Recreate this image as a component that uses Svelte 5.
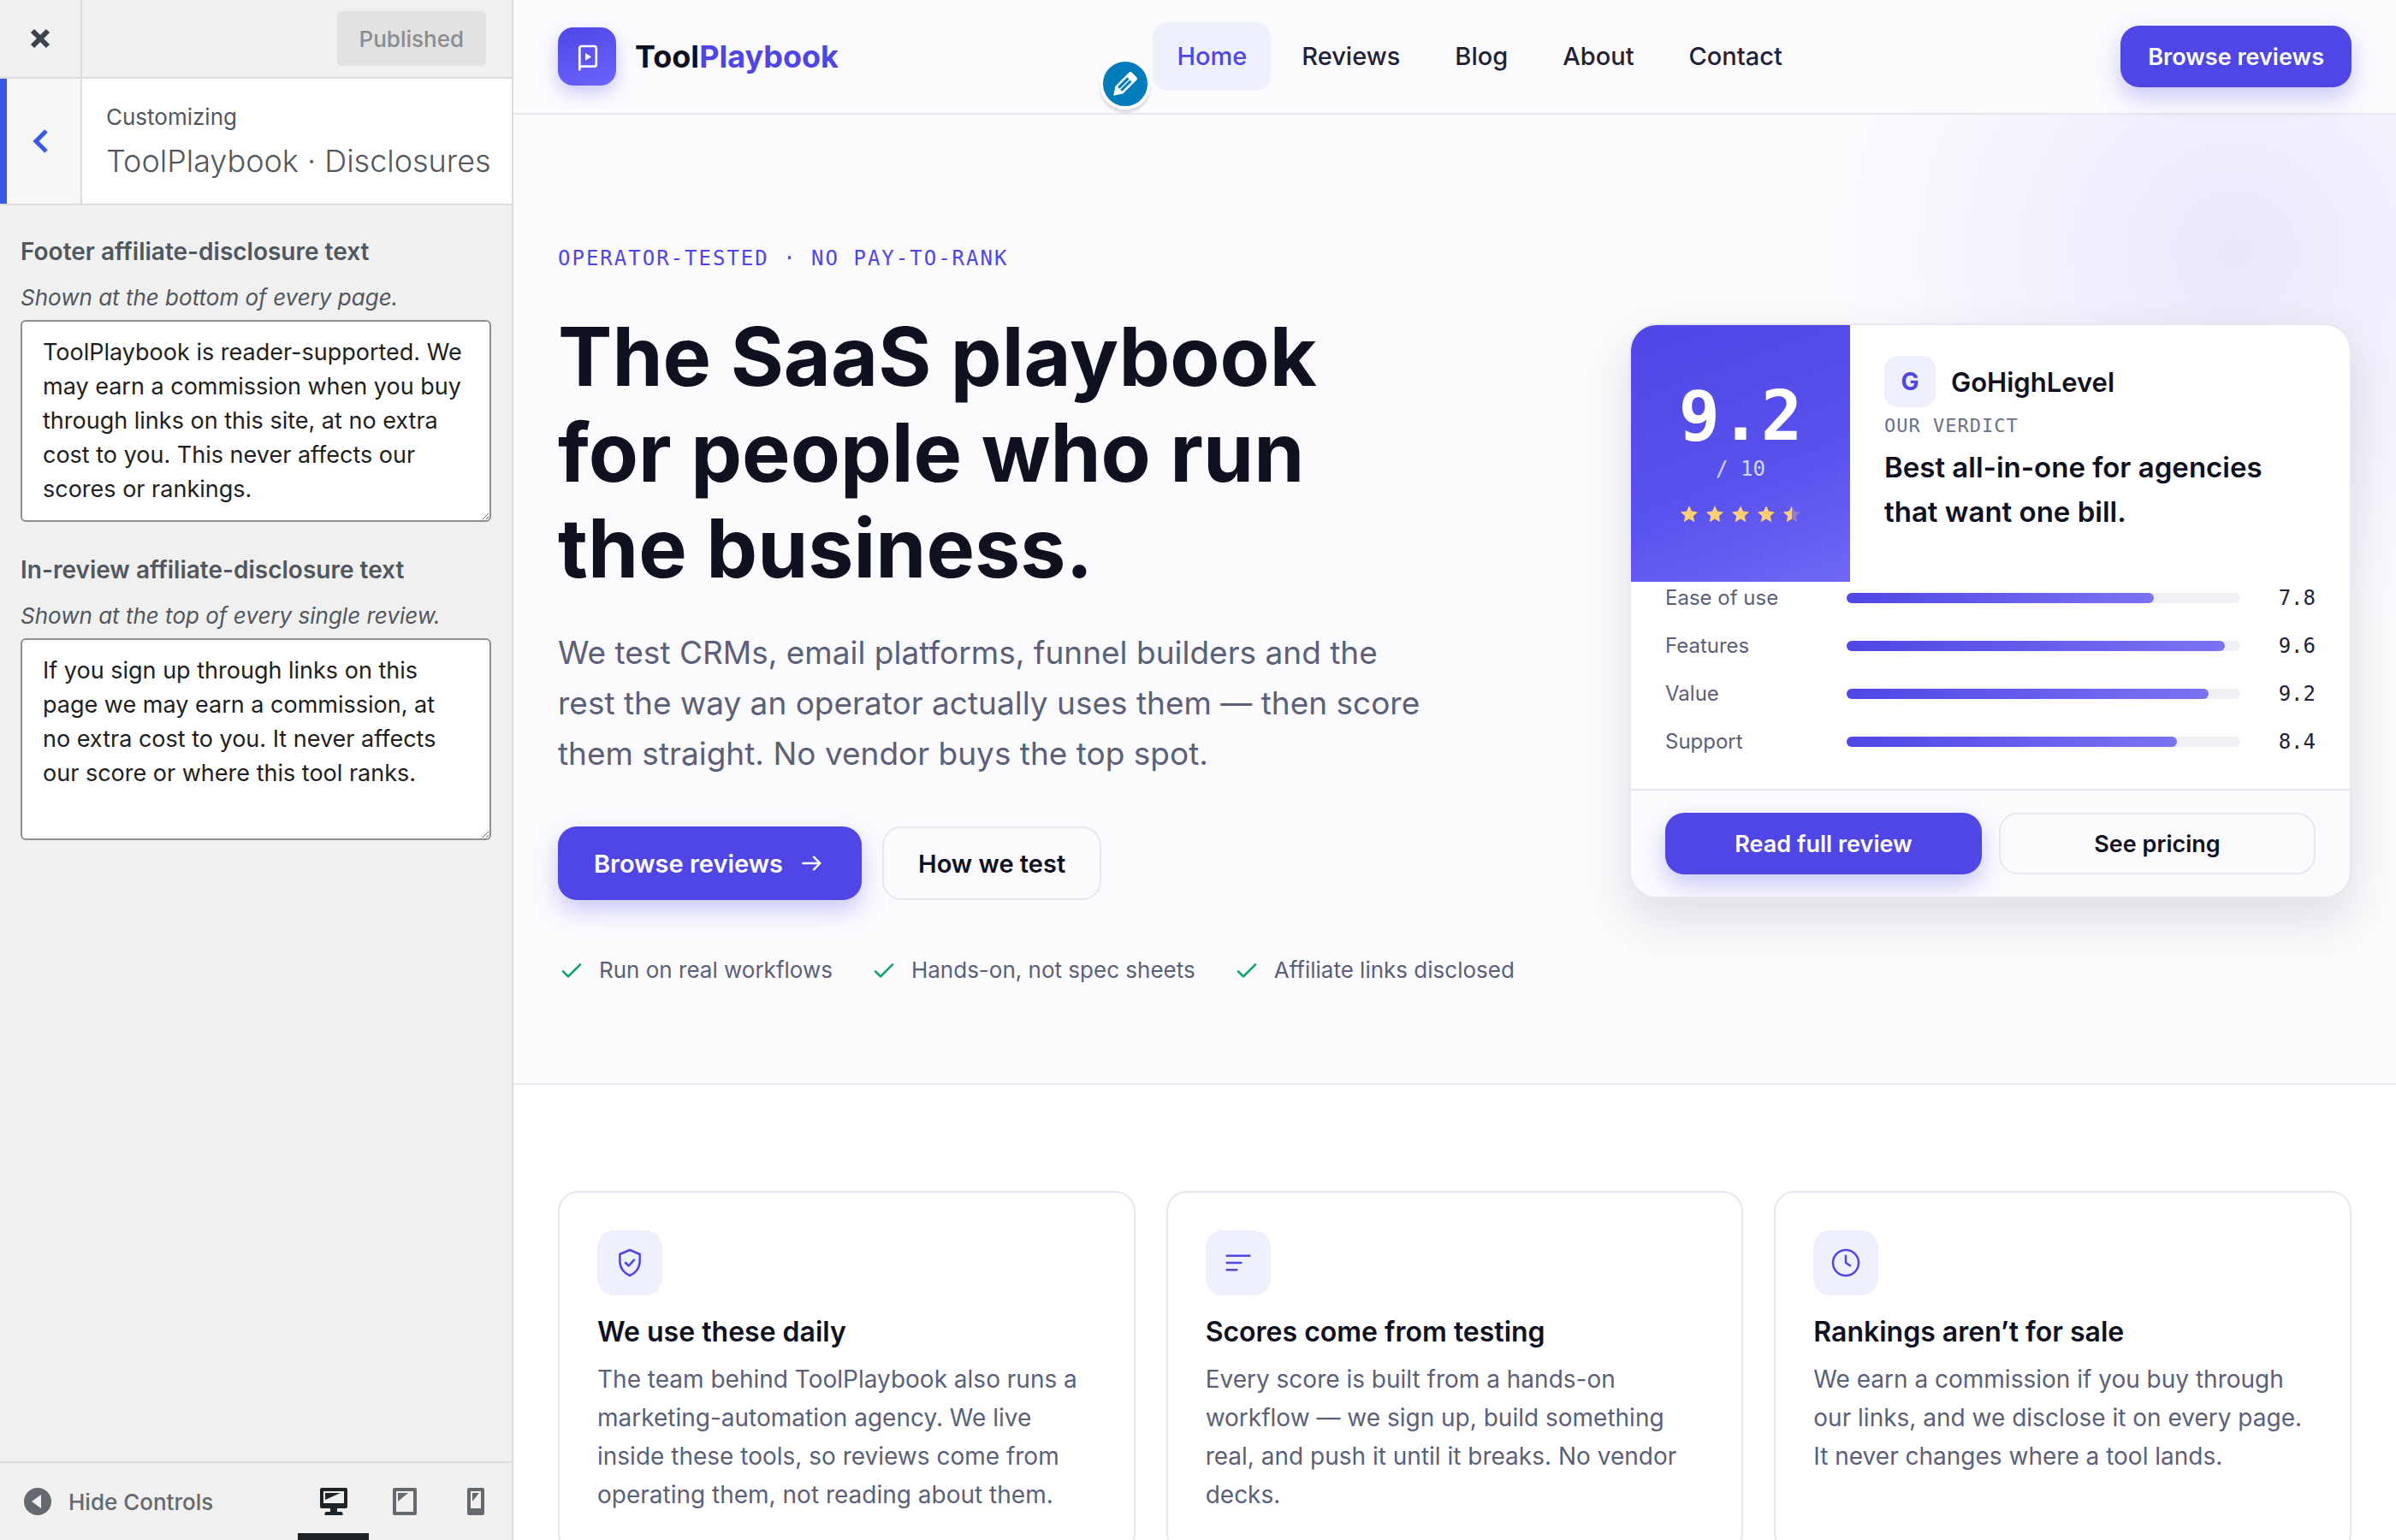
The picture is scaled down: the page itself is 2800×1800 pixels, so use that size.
<script lang="ts">
	const nav = ['Home', 'Reviews', 'Blog', 'About', 'Contact'];

	const proof = ['Run on real workflows', 'Hands-on, not spec sheets', 'Affiliate links disclosed'];

	const scores = [
		{ label: 'Ease of use', value: 7.8 },
		{ label: 'Features', value: 9.6 },
		{ label: 'Value', value: 9.2 },
		{ label: 'Support', value: 8.4 }
	];

	const features = [
		{
			icon: 'shield',
			title: 'We use these daily',
			text: 'The team behind ToolPlaybook also runs a marketing-automation agency. We live inside these tools, so reviews come from operating them, not reading about them.'
		},
		{
			icon: 'lines',
			title: 'Scores come from testing',
			text: 'Every score is built from a hands-on workflow — we sign up, build something real, and push it until it breaks. No vendor decks.'
		},
		{
			icon: 'clock',
			title: 'Rankings aren’t for sale',
			text: 'We earn a commission if you buy through our links, and we disclose it on every page. It never changes where a tool lands.'
		}
	];

	const starPath = 'M12 2l3 6.6 7 .8-5.2 4.8 1.5 7L12 17.6l-6.3 3.6 1.5-7L2 9.4l7-.8z';

	let footerText = $state(
		'ToolPlaybook is reader-supported. We may earn a commission when you buy through links on this site, at no extra cost to you. This never affects our scores or rankings.'
	);
	let reviewText = $state(
		'If you sign up through links on this page we may earn a commission, at no extra cost to you. It never affects our score or where this tool ranks.'
	);
</script>

<div class="customizer">
	<aside class="panel">
		<div class="panel-top">
			<button class="close" aria-label="Close the Customizer">
				<svg viewBox="0 0 24 24" width="24" height="24">
					<path d="M3 3l18 18M21 3L3 21" stroke="currentColor" stroke-width="6" />
				</svg>
			</button>
			<button class="publish" disabled>Published</button>
		</div>

		<div class="panel-title">
			<button class="back" aria-label="Back">
				<svg viewBox="0 0 18 28" width="18" height="28">
					<path d="M16 2L4 14l12 12" fill="none" stroke="currentColor" stroke-width="5" />
				</svg>
			</button>
			<div class="panel-heading">
				<span>Customizing</span>
				<h3>ToolPlaybook · Disclosures</h3>
			</div>
		</div>

		<div class="controls">
			<div class="control">
				<label for="footer-disclosure">Footer affiliate-disclosure text</label>
				<p id="footer-help">Shown at the bottom of every page.</p>
				<textarea id="footer-disclosure" aria-describedby="footer-help" rows="5" bind:value={footerText}></textarea>
			</div>
			<div class="control">
				<label for="review-disclosure">In-review affiliate-disclosure text</label>
				<p id="review-help">Shown at the top of every single review.</p>
				<textarea id="review-disclosure" aria-describedby="review-help" rows="5" bind:value={reviewText}></textarea>
			</div>
		</div>

		<div class="panel-footer">
			<button class="collapse">
				<svg viewBox="0 0 32 32" width="32" height="32">
					<circle cx="16" cy="16" r="16" fill="currentColor" />
					<path d="M9 16l11-8v16z" fill="#f0f0f0" />
				</svg>
				Hide Controls
			</button>
			<div class="devices">
				<button class="active" aria-label="Desktop preview">
					<svg viewBox="0 0 32 32" width="32" height="32" fill="currentColor">
						<path
							fill-rule="evenodd"
							d="M2 0h28a2 2 0 0 1 2 2v20a2 2 0 0 1-2 2H20v4h4.5a2 2 0 0 1 2 2v2h-21v-2a2 2 0 0 1 2-2H12v-4H2a2 2 0 0 1-2-2V2a2 2 0 0 1 2-2zM4 4v14h24V4z"
						/>
						<path d="M6 6h18L6 14z" />
					</svg>
				</button>
				<button aria-label="Tablet preview">
					<svg viewBox="0 0 28 32" width="28" height="32" fill="currentColor">
						<path
							fill-rule="evenodd"
							d="M2 0h24a2 2 0 0 1 2 2v28a2 2 0 0 1-2 2H2a2 2 0 0 1-2-2V2a2 2 0 0 1 2-2zM4 4v24h20V4z"
						/>
						<path d="M6 6h12L6 16z" />
					</svg>
				</button>
				<button aria-label="Mobile preview">
					<svg viewBox="0 0 20 32" width="20" height="32" fill="currentColor">
						<path
							fill-rule="evenodd"
							d="M2 0h16a2 2 0 0 1 2 2v28a2 2 0 0 1-2 2H2a2 2 0 0 1-2-2V2a2 2 0 0 1 2-2zM4 4v20h12V4z"
						/>
						<path d="M6 6h8L6 16z" />
					</svg>
				</button>
			</div>
		</div>
	</aside>

	<main class="preview">
		<header class="site-header">
			<a class="brand" href="#home">
				<span class="brand-mark">
					<svg viewBox="0 0 24 24" width="36" height="36" fill="none" stroke="#fff" stroke-width="1.8">
						<path
							d="M6.2 22.2V5.6A1.6 1.6 0 0 1 7.8 4h9.8a1.6 1.6 0 0 1 1.6 1.6v12.600a1.6 1.6 0 0 1-1.6 1.6H8a1.8 1.8 0 0 0-1.8 1.2"
							stroke-linecap="round"
							stroke-linejoin="round"
						/>
						<path d="M10.7 9.4l4.7 2.9-4.7 2.9z" fill="#fff" stroke="none" />
					</svg>
				</span>
				<span class="brand-name">Tool<em>Playbook</em></span>
			</a>
			<nav>
				<button class="edit-shortcut" aria-label="Edit this menu">
					<svg viewBox="0 0 20 20" width="40" height="40">
						<path
							fill="#fff"
							d="M13.890 3.390l2.710 2.720c.46.46.42 1.240.030 1.640l-8.010 8.020-5.560 1.160 1.160-5.580s7.600-7.630 7.990-8.030c.39-.39 1.220-.39 1.680.07zm-2.730 2.790l-5.590 5.610 1.110 1.110 5.540-5.650zm-2.970 8.230l5.580-5.600-1.070-1.080-5.590 5.600z"
						/>
					</svg>
				</button>
				{#each nav as item, i}
					<a href="#{item.toLowerCase()}" class:current={i === 0}>{item}</a>
				{/each}
			</nav>
			<a class="btn primary small" href="#reviews">Browse reviews</a>
		</header>

		<section class="hero">
			<div class="hero-copy">
				<p class="eyebrow">Operator-tested · No pay-to-rank</p>
				<h1>The SaaS playbook<br />for people who run<br />the business.</h1>
				<p class="lead">
					We test CRMs, email platforms, funnel builders and the rest the way an operator actually uses them —
					then score them straight. No vendor buys the top spot.
				</p>
				<div class="actions">
					<a class="btn primary" href="#reviews">
						Browse reviews
						<svg viewBox="0 0 24 24" width="32" height="32" fill="none" stroke="currentColor" stroke-width="1.8" stroke-linecap="round" stroke-linejoin="round">
							<path d="M4 12h15M13.5 6.5L19 12l-5.5 5.5" />
						</svg>
					</a>
					<a class="btn outline" href="#method">How we test</a>
				</div>
				<ul class="proof">
					{#each proof as item}
						<li>
							<svg viewBox="0 0 24 24" width="32" height="32" fill="none" stroke="currentColor" stroke-width="2" stroke-linecap="round" stroke-linejoin="round">
								<path d="M4.5 13L9 17.5 19.5 7" />
							</svg>
							{item}
						</li>
					{/each}
				</ul>
			</div>

			<article class="verdict">
				<div class="verdict-top">
					<div class="score">
						<strong>9.2</strong>
						<span>/ 10</span>
						<div class="stars" role="img" aria-label="4.5 out of 5 stars">
							{#each Array(5) as _, i}
								<svg viewBox="0 0 24 24" width="24" height="24">
									{#if i < 4}
										<path d={starPath} fill="#ffd073" />
									{:else}
										<path d={starPath} fill="#ffd073" opacity="0.3" />
										<path d="M12 2v15.6l-6.3 3.6 1.5-7L2 9.4l7-.8z" fill="#ffd073" />
									{/if}
								</svg>
							{/each}
						</div>
					</div>
					<div class="summary">
						<div class="tool">
							<span class="tool-mark">G</span>
							<span class="tool-name">GoHighLevel</span>
						</div>
						<p class="kicker">Our verdict</p>
						<h2>Best all-in-one for agencies that want one bill.</h2>
					</div>
				</div>
				<dl class="scores">
					{#each scores as score}
						<div class="score-row">
							<dt>{score.label}</dt>
							<dd class="track"><div class="fill" style="width: {score.value * 10}%"></div></dd>
							<dd class="value">{score.value.toFixed(1)}</dd>
						</div>
					{/each}
				</dl>
				<div class="verdict-actions">
					<a class="btn primary small" href="#review">Read full review</a>
					<a class="btn outline small" href="#pricing">See pricing</a>
				</div>
			</article>
		</section>

		<section class="features">
			{#each features as feature}
				<article class="feature">
					<div class="feature-icon">
						<svg viewBox="0 0 24 24" width="40" height="40" fill="none" stroke="currentColor" stroke-width="1.5" stroke-linecap="round" stroke-linejoin="round">
							{#if feature.icon === 'shield'}
								<path d="M12 3l7 3v5c0 4.5-3 8.3-7 10-4-1.7-7-5.5-7-10V6z" />
								<path d="M9 12l2.2 2.2L15 10" />
							{:else if feature.icon === 'lines'}
								<path d="M4 7h16M4 12h10M4 17h7" />
							{:else}
								<circle cx="12" cy="12" r="9" />
								<path d="M12 7v5l3 2" />
							{/if}
						</svg>
					</div>
					<h3>{feature.title}</h3>
					<p>{feature.text}</p>
				</article>
			{/each}
		</section>
	</main>
</div>

<style>
	:global(body) {
		font-family: Inter, 'Liberation Sans', sans-serif;
		-webkit-font-smoothing: antialiased;
	}

	h1,
	h2,
	h3,
	p,
	ul,
	dl,
	dd {
		margin: 0;
		padding: 0;
	}

	button {
		font: inherit;
		border: 0;
		padding: 0;
		background: none;
		cursor: pointer;
	}

	a {
		color: inherit;
		text-decoration: none;
	}

	svg {
		display: block;
		flex: none;
	}

	.customizer {
		display: grid;
		grid-template-columns: 600px 1fr;
		height: 100vh;
		overflow: hidden;
	}

	/* Sidebar */
	.panel {
		display: flex;
		flex-direction: column;
		background: #f0f0f0;
		border-right: 2px solid #dcdcde;
		color: #50575e;
	}

	.panel-top {
		display: flex;
		align-items: center;
		justify-content: space-between;
		height: 90px;
		padding-right: 30px;
		border-bottom: 2px solid #dcdcde;
	}

	.close {
		display: grid;
		place-items: center;
		width: 96px;
		height: 100%;
		box-sizing: border-box;
		border-right: 2px solid #dcdcde;
		color: #3c434a;
	}

	.publish {
		height: 64px;
		padding: 0 26px;
		border-radius: 6px;
		background: #e2e2e2;
		color: #8c8c8c;
		font-size: 26px;
		font-weight: 500;
	}

	.panel-title {
		display: flex;
		height: 146px;
		background: #fff;
		border-bottom: 2px solid #dcdcde;
	}

	.back {
		display: grid;
		place-items: center;
		width: 96px;
		box-sizing: border-box;
		border-right: 2px solid #dcdcde;
		background: #f6f7f7;
		box-shadow: inset 8px 0 #3858e9;
		color: #3858e9;
	}

	.panel-heading {
		padding: 24px 0 0 28px;
		font-size: 26px;
		line-height: 42px;
		white-space: nowrap;
	}

	.panel-heading h3 {
		font-size: 36px;
		font-weight: 300;
		line-height: 60px;
	}

	.controls {
		display: flex;
		flex: 1;
		flex-direction: column;
		gap: 36px;
		padding: 34px 24px;
	}

	.control {
		display: flex;
		flex-direction: column;
	}

	.control label {
		font-size: 28px;
		font-weight: 600;
		line-height: 40px;
	}

	.control p {
		margin: 16px 0 8px;
		font-size: 26px;
		font-style: italic;
		line-height: 36px;
	}

	textarea {
		padding: 16px 28px 16px 24px;
		border: 2px solid #8c8f94;
		border-radius: 6px;
		background: #fff;
		color: #1e1e1e;
		font: 27px/40px Inter, 'Liberation Sans', sans-serif;
		resize: vertical;
	}

	.panel-footer {
		display: flex;
		justify-content: space-between;
		height: 90px;
		padding-left: 28px;
		border-top: 2px solid #dcdcde;
		color: #646970;
	}

	.collapse {
		display: flex;
		align-items: center;
		gap: 20px;
		color: inherit;
		font-size: 26px;
		font-weight: 500;
	}

	.devices {
		display: flex;
		width: 250px;
	}

	.devices button {
		display: grid;
		flex: 1;
		place-items: center;
		border-top: 8px solid transparent;
		border-bottom: 8px solid transparent;
		color: inherit;
	}

	.devices .active {
		border-bottom-color: #1d2327;
		color: #1d2327;
	}

	/* Site preview */
	.preview {
		overflow: hidden;
		background: #fff;
		color: #0f1020;
	}

	.site-header {
		display: flex;
		align-items: center;
		justify-content: space-between;
		height: 132px;
		padding: 0 52px;
		border-bottom: 2px solid #e7e7f0;
		background: #fbfbfe;
	}

	.brand {
		display: flex;
		align-items: center;
		gap: 22px;
	}

	.brand-mark {
		display: grid;
		place-items: center;
		width: 68px;
		height: 68px;
		border-radius: 18px;
		background: linear-gradient(160deg, #4f46e5, #6d63ff);
		box-shadow: 0 8px 20px rgba(79, 70, 229, 0.28);
	}

	.brand-name {
		font-size: 36px;
		font-weight: 700;
	}

	.brand-name em {
		color: #4f46e5;
		font-style: normal;
	}

	nav {
		position: relative;
		display: flex;
		gap: 8px;
	}

	nav a {
		padding: 0 28px;
		border-radius: 18px;
		color: #1f2136;
		font-size: 29px;
		font-weight: 500;
		line-height: 80px;
	}

	nav .current {
		background: #eef0fd;
		color: #4f46e5;
	}

	.edit-shortcut {
		position: absolute;
		top: 42px;
		left: -62px;
		display: grid;
		place-items: center;
		width: 60px;
		height: 60px;
		border: 4px solid #fff;
		border-radius: 50%;
		background: #007cba;
		box-shadow: 0 4px 2px rgba(46, 68, 83, 0.15);
	}

	.btn {
		display: flex;
		align-items: center;
		justify-content: center;
		gap: 18px;
		height: 86px;
		padding: 0 42px;
		box-sizing: border-box;
		border-radius: 22px;
		font-size: 29px;
		font-weight: 600;
		white-space: nowrap;
	}

	.btn.small {
		height: 72px;
		padding: 0 32px;
		font-size: 27px;
	}

	.btn.primary {
		background: #4f46e5;
		color: #fff;
		box-shadow: 0 12px 28px rgba(79, 70, 229, 0.28);
	}

	.btn.outline {
		padding: 0 40px;
		border: 2px solid #e7e7f0;
	}

	.hero {
		display: grid;
		grid-template-columns: 1fr 844px;
		align-items: center;
		gap: 100px;
		padding: 144px 52px 116px;
		border-bottom: 2px solid #e7e7f0;
		background:
			radial-gradient(circle 470px at calc(100% - 188px) 160px, rgba(79, 70, 229, 0.1), transparent) no-repeat,
			#fbfbfe;
	}

	.eyebrow,
	.kicker {
		font-family: 'DejaVu Sans Mono', monospace;
		text-transform: uppercase;
	}

	.eyebrow {
		color: #4f46e5;
		font-size: 24px;
		letter-spacing: 2px;
		line-height: 48px;
	}

	h1 {
		margin: 35px 0 36px;
		font-size: 95px;
		font-weight: 700;
		line-height: 112px;
	}

	.lead {
		max-width: 1020px;
		color: #5b5f78;
		font-size: 37px;
		line-height: 59px;
	}

	.actions {
		display: flex;
		gap: 24px;
		margin: 56px 0 66px;
	}

	.proof {
		display: flex;
		gap: 44px;
		color: #5b5f78;
		font-size: 26px;
		line-height: 32px;
		list-style: none;
	}

	.proof li {
		display: flex;
		gap: 16px;
	}

	.proof svg {
		color: #12a071;
	}

	/* Verdict card */
	.verdict {
		overflow: hidden;
		border: 2px solid #e7e7f0;
		border-radius: 32px;
		background: #fff;
		box-shadow: 0 24px 56px rgba(15, 16, 32, 0.12);
	}

	.verdict-top {
		display: grid;
		grid-template-columns: 256px 1fr;
		min-height: 300px;
	}

	.score {
		display: flex;
		flex-direction: column;
		align-items: center;
		justify-content: center;
		background: linear-gradient(160deg, #4f46e5, #5a52ee 60%, #7068f4);
		color: #fff;
		font-family: 'DejaVu Sans Mono', monospace;
	}

	.score strong {
		font-size: 80px;
		line-height: 80px;
	}

	.score span {
		margin-bottom: 20px;
		font-size: 24px;
		line-height: 42px;
		opacity: 0.75;
	}

	.stars {
		display: flex;
		gap: 6px;
	}

	.summary {
		padding: 36px 40px;
	}

	.tool {
		display: flex;
		align-items: center;
		gap: 18px;
	}

	.tool-mark {
		display: grid;
		place-items: center;
		width: 60px;
		height: 60px;
		border-radius: 16px;
		background: #eef0fd;
		color: #4f46e5;
		font-size: 28px;
		font-weight: 700;
	}

	.tool-name {
		font-size: 31px;
		font-weight: 600;
	}

	.kicker {
		margin: 4px 0;
		color: #6b6f88;
		font-size: 22px;
		letter-spacing: 1px;
		line-height: 36px;
	}

	.summary h2 {
		font-size: 33px;
		font-weight: 600;
		line-height: 52px;
	}

	.scores {
		display: flex;
		flex-direction: column;
		gap: 18px;
		padding: 0 40px 36px;
	}

	.score-row {
		display: grid;
		grid-template-columns: 184px 1fr 60px;
		align-items: center;
		gap: 28px;
		line-height: 38px;
	}

	.score-row dt {
		color: #5b5f78;
		font-size: 24px;
	}

	.track {
		height: 12px;
		border-radius: 6px;
		background: #eff0f4;
	}

	.fill {
		height: 100%;
		border-radius: 6px;
		background: linear-gradient(90deg, #4f46e5, #7b72f1);
	}

	.value {
		color: #1f2136;
		font-family: 'DejaVu Sans Mono', monospace;
		font-size: 24px;
		text-align: right;
	}

	.verdict-actions {
		display: grid;
		grid-template-columns: 1fr 1fr;
		gap: 20px;
		padding: 26px 40px;
		border-top: 2px solid #e7e7f0;
		background: #fbfbfe;
	}

	/* Reasons */
	.features {
		display: grid;
		grid-template-columns: repeat(3, 1fr);
		gap: 36px;
		padding: 124px 52px;
	}

	.feature {
		padding: 44px;
		border: 2px solid #e7e7f0;
		border-radius: 24px;
	}

	.feature-icon {
		display: grid;
		place-items: center;
		width: 76px;
		height: 76px;
		border-radius: 20px;
		background: #eef0fd;
		color: #4f46e5;
	}

	.feature h3 {
		margin: 21px 0 11px;
		font-size: 32px;
		font-weight: 600;
		line-height: 44px;
	}

	.feature p {
		color: #5b5f78;
		font-size: 28px;
		line-height: 45px;
	}
</style>
